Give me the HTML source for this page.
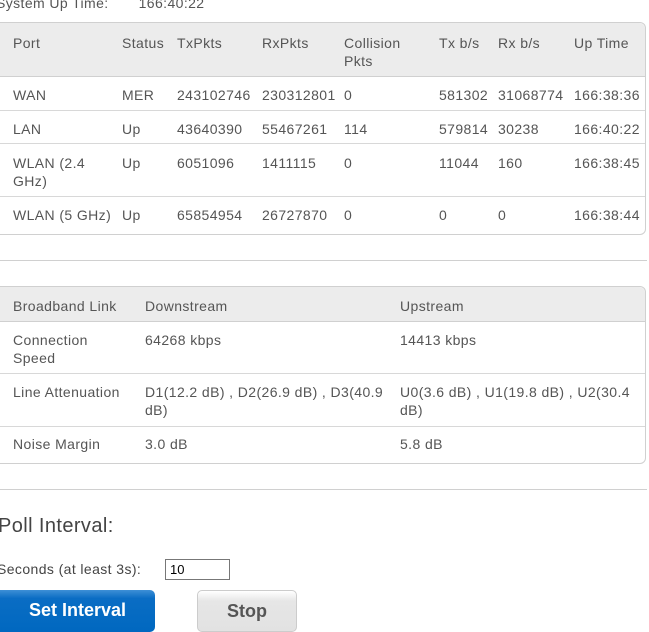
<!DOCTYPE html><html><head><style>
body{margin:0;width:649px;height:632px;overflow:hidden;background:#fff;font-family:"Liberation Sans",sans-serif;font-size:14px;color:#555;position:relative;letter-spacing:0.4px}
.a{position:absolute;line-height:18px;white-space:nowrap}
.box{position:absolute;left:0;width:646px;border:1px solid #d0d0d0;border-left:none;border-radius:0 6px 6px 0;box-sizing:border-box}
.hd{position:absolute;left:0;right:0;top:0;background:#ececec;border-bottom:1px solid #d0d0d0;border-radius:0 6px 0 0}
.ln{position:absolute;left:0;right:0;height:1px;background:#d8d8d8}
.hr{position:absolute;left:0;width:647px;height:1px;background:#d0d0d0}
</style></head><body>
<div class="a" style="left:-4px;top:-6px">System Up Time:&nbsp;&nbsp;&nbsp;&nbsp;&nbsp;&nbsp; 166:40:22</div>
<div class="box" style="top:22px;height:213px">
<div class="hd" style="height:53px"></div>
<div class="ln" style="top:87px"></div><div class="ln" style="top:120px"></div><div class="ln" style="top:173px"></div>
</div>
<div class="a" style="left:13px;top:34px">Port</div><div class="a" style="left:122px;top:34px">Status</div><div class="a" style="left:177px;top:34px">TxPkts</div><div class="a" style="left:262px;top:34px">RxPkts</div><div class="a" style="left:344px;top:34px">Collision<br>Pkts</div><div class="a" style="left:439px;top:34px">Tx b/s</div><div class="a" style="left:498px;top:34px">Rx b/s</div><div class="a" style="left:574px;top:34px">Up Time</div>
<div class="a" style="left:13px;top:86px">WAN</div><div class="a" style="left:122px;top:86px">MER</div><div class="a" style="left:177px;top:86px">243102746</div><div class="a" style="left:262px;top:86px">230312801</div><div class="a" style="left:344px;top:86px">0</div><div class="a" style="left:439px;top:86px">581302</div><div class="a" style="left:498px;top:86px">31068774</div><div class="a" style="left:574px;top:86px">166:38:36</div>
<div class="a" style="left:13px;top:120px">LAN</div><div class="a" style="left:122px;top:120px">Up</div><div class="a" style="left:177px;top:120px">43640390</div><div class="a" style="left:262px;top:120px">55467261</div><div class="a" style="left:344px;top:120px">114</div><div class="a" style="left:439px;top:120px">579814</div><div class="a" style="left:498px;top:120px">30238</div><div class="a" style="left:574px;top:120px">166:40:22</div>
<div class="a" style="left:13px;top:154px">WLAN (2.4<br>GHz)</div><div class="a" style="left:122px;top:154px">Up</div><div class="a" style="left:177px;top:154px">6051096</div><div class="a" style="left:262px;top:154px">1411115</div><div class="a" style="left:344px;top:154px">0</div><div class="a" style="left:439px;top:154px">11044</div><div class="a" style="left:498px;top:154px">160</div><div class="a" style="left:574px;top:154px">166:38:45</div>
<div class="a" style="left:13px;top:206px">WLAN (5 GHz)</div><div class="a" style="left:122px;top:206px">Up</div><div class="a" style="left:177px;top:206px">65854954</div><div class="a" style="left:262px;top:206px">26727870</div><div class="a" style="left:344px;top:206px">0</div><div class="a" style="left:439px;top:206px">0</div><div class="a" style="left:498px;top:206px">0</div><div class="a" style="left:574px;top:206px">166:38:44</div>
<div class="hr" style="top:260px"></div>
<div class="box" style="top:286px;height:178px">
<div class="hd" style="height:34px"></div>
<div class="ln" style="top:86px"></div><div class="ln" style="top:139px"></div>
</div>
<div class="a" style="left:13px;top:297px">Broadband Link</div><div class="a" style="left:145px;top:297px">Downstream</div><div class="a" style="left:400px;top:297px">Upstream</div>
<div class="a" style="left:13px;top:331px">Connection<br>Speed</div><div class="a" style="left:145px;top:331px">64268 kbps</div><div class="a" style="left:400px;top:331px">14413 kbps</div>
<div class="a" style="left:13px;top:383px">Line Attenuation</div><div class="a" style="left:145px;top:383px">D1(12.2 dB) , D2(26.9 dB) , D3(40.9<br>dB)</div><div class="a" style="left:400px;top:383px">U0(3.6 dB) , U1(19.8 dB) , U2(30.4<br>dB)</div>
<div class="a" style="left:13px;top:435px">Noise Margin</div><div class="a" style="left:145px;top:435px">3.0 dB</div><div class="a" style="left:400px;top:435px">5.8 dB</div>
<div class="hr" style="top:489px"></div>
<div class="a" style="left:-2px;top:514px;font-size:20px;line-height:24px;color:#444">Poll Interval:</div>
<div class="a" style="left:-3px;top:560px;color:#444">Seconds (at least 3s):</div>
<div style="position:absolute;left:165px;top:559px;width:65px;height:21px;border:1px solid #777;box-sizing:border-box;font-size:13px;color:#000;padding:2px 4px;letter-spacing:0">10</div>
<div style="position:absolute;left:0;top:590px;width:155px;height:42px;background:linear-gradient(#3d8fd6,#0a6dc4 20%,#0068c0);border-radius:0 5px 5px 0;color:#fff;font-weight:bold;font-size:18px;line-height:40px;text-align:center;letter-spacing:0">Set Interval</div>
<div style="position:absolute;left:197px;top:590px;width:100px;height:42px;background:linear-gradient(#fff,#e6e6e6 25%,#e2e2e2);border:1px solid #ccc;box-sizing:border-box;border-radius:5px;color:#555;font-weight:bold;font-size:18px;line-height:40px;text-align:center;letter-spacing:0">Stop</div>
</body></html>
